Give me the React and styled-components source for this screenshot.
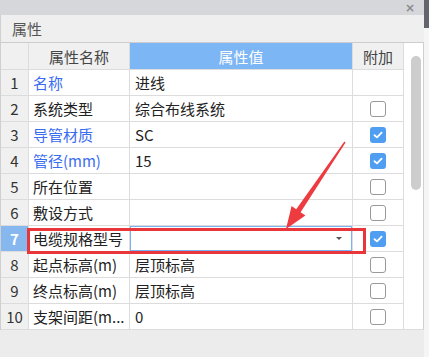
import React from 'react';
import styled, { createGlobalStyle } from 'styled-components';

const GlobalStyle = createGlobalStyle`
    body {
        margin: 0;
        font-family: "Noto Sans CJK SC", "Noto Sans", sans-serif;
        background: #ececec;
    }
`

const rows = [
    { no: 1, name: '名称', blue: true, value: '进线', box: null },
    { no: 2, name: '系统类型', value: '综合布线系统', box: false },
    { no: 3, name: '导管材质', blue: true, value: 'SC', box: true },
    { no: 4, name: '管径(mm)', blue: true, value: '15', box: true },
    { no: 5, name: '所在位置', value: '', box: false },
    { no: 6, name: '敷设方式', value: '', box: false },
    { no: 7, name: '电缆规格型号', value: '', box: true, editing: true },
    { no: 8, name: '起点标高(m)', value: '层顶标高', box: false },
    { no: 9, name: '终点标高(m)', value: '层顶标高', box: false },
    { no: 10, name: '支架间距(m...', value: '0', box: false },
]

function CheckBox({ checked }) {
    return (
        <Box checked={checked}>
            {checked && (
                <svg width="10" height="8" viewBox="0 0 10 8">
                    <path d="M1.5 4.2 L4 6.4 L8.6 1.6" fill="none" stroke="#fff" strokeWidth="1.8" strokeLinecap="round" strokeLinejoin="round" />
                </svg>
            )}
        </Box>
    )
}

function App() {
    return (
        <Window>
            <GlobalStyle />
            <Main>
                <TopBar>
                    <Close>×</Close>
                </TopBar>
                <TitleBar>属性</TitleBar>
                <Body>
                    <Table>
                        <Row>
                            <NoCell />
                            <HeadCell>属性名称</HeadCell>
                            <HeadCell active>属性值</HeadCell>
                            <HeadCell>附加</HeadCell>
                        </Row>
                        {rows.map((r) => (
                            <Row key={r.no}>
                                <NoCell selected={r.editing}>{r.no}</NoCell>
                                <NameCell blue={r.blue}>{r.name}</NameCell>
                                <ValueCell>
                                    {r.editing ? (
                                        <Editor>
                                            <Caret />
                                        </Editor>
                                    ) : r.value}
                                </ValueCell>
                                <BoxCell>{r.box !== null && <CheckBox checked={r.box} />}</BoxCell>
                            </Row>
                        ))}
                    </Table>
                    <ScrollArea>
                        <Thumb />
                    </ScrollArea>
                </Body>
                <Footer />
            </Main>
            <Edge>
                <EdgeCap />
            </Edge>
            <Highlight />
            <Arrow width="429" height="357" viewBox="0 0 429 357">
                <polygon
                    points="345.6,142.4 300.6,212.3 305.4,215.6 286,229 291.6,206 296.2,209.3 344.4,141.6"
                    fill="#ee3b3f"
                />
            </Arrow>
        </Window>
    );
}

const Window = styled.div`
    position: relative;
    width: 429px;
    height: 357px;
    display: flex;
    overflow: hidden;
    background: #ececec;
`

const Main = styled.div`
    width: 424px;
    display: flex;
    flex-direction: column;
`

const TopBar = styled.div`
    height: 15px;
    background: #d6d7db;
    display: flex;
    justify-content: flex-end;
    align-items: center;
    padding-right: 9px;
`

const Close = styled.span`
    font-family: "DejaVu Sans", sans-serif;
    font-size: 12px;
    font-weight: bold;
    color: #8a8b8e;
    line-height: 1;
`

const TitleBar = styled.div`
    height: 28px;
    box-sizing: border-box;
    background: #efefef;
    border-bottom: 1px solid #cdcdcd;
    border-left: 1px solid #d0d0d0;
    padding-left: 11px;
    display: flex;
    align-items: center;
    font-size: 15px;
    color: #555;
`

const Body = styled.div`
    display: flex;
    border-left: 1px solid #cfcfcf;
    background: #fff;
`

const Table = styled.div`
    display: flex;
    flex-direction: column;
    width: 403px;
`

const Row = styled.div`
    display: grid;
    grid-template-columns: 28px 101px 223px 51px;
    height: 26px;
    &:first-child {
        height: 27px;
    }
`

const Cell = styled.div`
    box-sizing: border-box;
    border-right: 1px solid #dcdcdc;
    border-bottom: 1px solid #dcdcdc;
    display: flex;
    align-items: center;
    font-size: 15px;
    color: #222;
    white-space: nowrap;
    overflow: hidden;
`

const NoCell = styled(Cell)`
    justify-content: center;
    background: ${(p) => (p.selected ? '#86b8ef' : '#f0f0f0')};
    color: ${(p) => (p.selected ? '#fff' : '#333')};
    font-weight: ${(p) => (p.selected ? 'bold' : 'normal')};
`

const HeadCell = styled(Cell)`
    justify-content: center;
    background: ${(p) => (p.active ? '#7db6f5' : '#f0f0f0')};
    color: ${(p) => (p.active ? '#fff' : '#444')};
`

const NameCell = styled(Cell)`
    padding-left: 4px;
    color: ${(p) => (p.blue ? '#3a6cf0' : '#222')};
`

const ValueCell = styled(Cell)`
    padding-left: 5px;
`

const Editor = styled.div`
    flex: 1;
    align-self: stretch;
    margin-left: -5px;
    box-sizing: border-box;
    border: 1px solid #79b2f2;
    display: flex;
    justify-content: flex-end;
    align-items: center;
    padding-right: 9px;
`

const Caret = styled.span`
    width: 0;
    height: 0;
    border-left: 3px solid transparent;
    border-right: 3px solid transparent;
    border-top: 3px solid #555;
`

const BoxCell = styled(Cell)`
    justify-content: center;
`

const Box = styled.div`
    width: 16px;
    height: 16px;
    box-sizing: border-box;
    border-radius: 3px;
    border: ${(p) => (p.checked ? 'none' : '1.5px solid #999')};
    background: ${(p) => (p.checked ? '#4f9ef2' : '#fff')};
    display: flex;
    align-items: center;
    justify-content: center;
`

const ScrollArea = styled.div`
    width: 20px;
    box-sizing: border-box;
    border-right: 1px solid #cfcfcf;
    border-bottom: 1px solid #dcdcdc;
    padding: 13px 0 0 7px;
`

const Thumb = styled.div`
    width: 10px;
    height: 134px;
    border-radius: 5px;
    background: #cdcdcd;
`

const Footer = styled.div`
    flex: 1;
    background: #ececec;
`

const Edge = styled.div`
    width: 5px;
    background: #f5f5f5;
`

const EdgeCap = styled.div`
    height: 28px;
    background: #62666c;
`

const Highlight = styled.div`
    position: absolute;
    left: 27px;
    top: 228px;
    width: 339px;
    height: 26px;
    box-sizing: border-box;
    border: 3px solid #e8363b;
    pointer-events: none;
`

const Arrow = styled.svg`
    position: absolute;
    left: 0;
    top: 0;
    pointer-events: none;
`

export default App;
